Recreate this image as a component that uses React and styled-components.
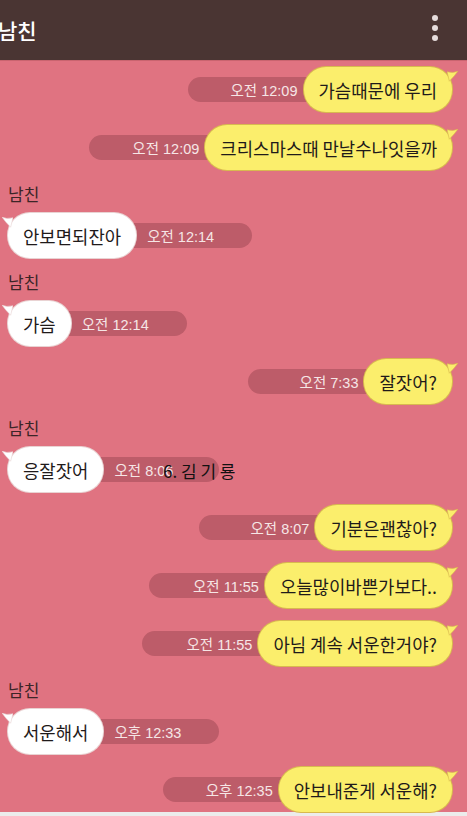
import styled, { createGlobalStyle } from "styled-components";

const GlobalStyle = createGlobalStyle`
  html, body {
    margin: 0;
    padding: 0;
    background: #e07381;
  }
  body {
    font-family: "Noto Sans CJK KR", "Noto Sans", "Liberation Sans", sans-serif;
    overflow: hidden;
  }
`;

const messages = [
  { id: 1, mine: true, text: "가슴때문에 우리", time: "오전 12:09" },
  { id: 2, mine: true, text: "크리스마스때 만날수나잇을까", time: "오전 12:09" },
  { id: 3, mine: false, text: "안보면되잔아", time: "오전 12:14" },
  { id: 4, mine: false, text: "가슴", time: "오전 12:14" },
  { id: 5, mine: true, text: "잘잣어?", time: "오전 7:33" },
  { id: 6, mine: false, text: "응잘잣어", time: "오전 8:06", mark: true },
  { id: 7, mine: true, text: "기분은괜찮아?", time: "오전 8:07" },
  { id: 8, mine: true, text: "오늘많이바쁜가보다..", time: "오전 11:55" },
  { id: 9, mine: true, text: "아님 계속 서운한거야?", time: "오전 11:55" },
  { id: 10, mine: false, text: "서운해서", time: "오후 12:33" },
  { id: 11, mine: true, text: "안보내준게 서운해?", time: "오후 12:35" },
];

const Message = ({ mine, text, time, mark }) => (
  <Row $mine={mine}>
    {!mine && <Name>남친</Name>}
    <Line $mine={mine}>
      <Bubble $mine={mine}>
        {text}
        <Tail $mine={mine} viewBox="0 0 14 14">
          <path
            d={
              mine
                ? "M0 1 Q9 3 14 0 Q10 6 3 13 Z"
                : "M14 1 Q5 3 0 0 Q4 6 11 13 Z"
            }
            fill={mine ? "#fbee6c" : "#ffffff"}
            stroke={mine ? "#d8b94f" : "#e9d3d3"}
            strokeWidth="0.8"
          />
        </Tail>
      </Bubble>
      <Time $mine={mine}>{time}</Time>
      {mark && <Watermark>6. 김 기 룡</Watermark>}
    </Line>
  </Row>
);

const App = () => {
  return (
    <Screen>
      <GlobalStyle />
      <Header>
        <Title>남친</Title>
        <Dots>
          <span />
          <span />
          <span />
        </Dots>
      </Header>
      <Chat>
        {messages.map((m) => (
          <Message key={m.id} {...m} />
        ))}
      </Chat>
      <Bottom />
    </Screen>
  );
};

export default App;

const Screen = styled.div`
  width: 467px;
  height: 816px;
  display: flex;
  flex-direction: column;
  background: #e07381;
`;

const Header = styled.header`
  height: 60px;
  flex-shrink: 0;
  background: #4a3533;
  display: flex;
  align-items: center;
  justify-content: space-between;
  padding: 0 29px 0 0;
  border-bottom: 1px solid #c9646f;
`;

const Title = styled.h1`
  margin: 0 0 0 -2px;
  font-size: 21px;
  font-weight: 500;
  color: #ffffff;
`;

const Dots = styled.div`
  display: flex;
  flex-direction: column;
  gap: 4px;
  margin-top: -4px;

  span {
    width: 6px;
    height: 6px;
    border-radius: 50%;
    background: #e6dcdc;
  }
`;

const Chat = styled.main`
  flex: 1;
  display: flex;
  flex-direction: column;
  gap: 13px;
  padding: 6px 15px 0 8px;
`;

const Row = styled.div`
  display: flex;
  flex-direction: column;
  align-items: ${(p) => (p.$mine ? "flex-end" : "flex-start")};
`;

const Name = styled.div`
  font-size: 17px;
  color: #3b2527;
  line-height: 22px;
  margin-bottom: 8px;
`;

const Line = styled.div`
  position: relative;
  display: flex;
  flex-direction: ${(p) => (p.$mine ? "row-reverse" : "row")};
  align-items: center;
`;

const Bubble = styled.div`
  position: relative;
  z-index: 1;
  height: 45px;
  box-sizing: border-box;
  display: flex;
  align-items: center;
  padding: 0 15px;
  border-radius: 22px;
  font-size: 17.8px;
  color: #1f1a1a;
  white-space: nowrap;
  background: ${(p) => (p.$mine ? "#fbee6c" : "#ffffff")};
  box-shadow: ${(p) =>
    p.$mine ? "0 0 0 1px #d8b94f" : "0 0 0 1px #e9d3d3"};
`;

const Tail = styled.svg`
  position: absolute;
  top: 4px;
  width: 11px;
  height: 11px;
  ${(p) => (p.$mine ? "right: -6px;" : "left: -6px;")}
`;

const Time = styled.div`
  width: 130px;
  height: 25px;
  box-sizing: border-box;
  display: flex;
  align-items: center;
  justify-content: ${(p) => (p.$mine ? "flex-end" : "flex-start")};
  border-radius: 13px;
  background: #bd5c69;
  color: #f6e6e6;
  font-size: 14.5px;
  font-family: "Liberation Sans", "Noto Sans CJK KR", sans-serif;
  white-space: nowrap;
  ${(p) =>
    p.$mine
      ? "margin-right: -14px; padding-right: 20px;"
      : "margin-left: -14px; padding-left: 25px;"}
`;

const Watermark = styled.span`
  position: absolute;
  left: 155px;
  top: 11px;
  z-index: 2;
  font-size: 17px;
  color: #111111;
  white-space: nowrap;
`;

const Bottom = styled.div`
  height: 5px;
  background: #ececec;
`;
